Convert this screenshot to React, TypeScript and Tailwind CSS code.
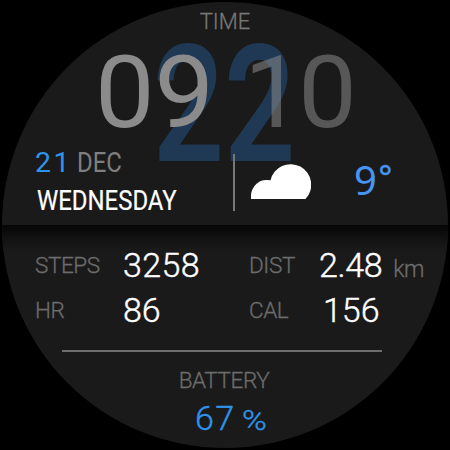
interface StatProps {
  label: string;
  value: string;
  unit?: string;
  valueClass: string;
}

function Stat({ label, value, unit, valueClass }: StatProps) {
  return (
    <div className="flex h-[45px] leading-[45px] whitespace-nowrap font-light">
      <span className="text-[22.5px] tracking-[-0.4px] text-[#6c6c6c] [-webkit-text-stroke:0.3px]">
        {label}
      </span>
      <div className="flex-1" />
      <div className={`shrink-0 text-[34px] text-white [-webkit-text-stroke:0.4px] ${valueClass}`}>
        {value}
        {unit && (
          <span className="ml-[11px] text-[23px] tracking-[-0.3px] text-[#6c6c6c] [-webkit-text-stroke:0.3px]">
            {unit}
          </span>
        )}
      </div>
    </div>
  );
}

function Cloud() {
  return (
    <svg className="w-[60px] h-[35px]" viewBox="0 0 60 35" fill="white">
      <path d="M0 35V33A16 16 0 0 1 19.5 16.3A20.6 20.6 0 1 1 54.5 35Z" />
    </svg>
  );
}

function App() {
  return (
    <div className="w-[450px] h-[450px] bg-black p-[2px] font-['Roboto','Liberation_Sans',sans-serif]">
      <div className="relative w-[446px] h-[446px] rounded-full overflow-hidden bg-[#1a1a1a]">
        {/* Seconds, behind the hours and minutes */}
        <div className="absolute left-[151px] top-[22px] text-[163px] leading-none font-semibold text-[#1f3854] origin-left scale-x-[0.765] whitespace-nowrap">
          22
        </div>

        <div className="relative h-[223px]">
          <div className="pt-[8px] text-center text-[22px] leading-[24px] font-light text-[#777777] [-webkit-text-stroke:0.3px]">
            TIME
          </div>
          <div className="mt-[8px] pl-[93px] flex h-[101px] text-[101px] leading-none">
            <span className="w-[149px] origin-left scale-x-[1.05] text-[#8b8b8b]">09</span>
            <span className="tracking-[-4px] origin-left scale-x-[1.03] text-[#8b8b8b]/55">10</span>
          </div>

          <div className="mt-[6px] pl-[33px] flex">
            <div className="w-[198px] whitespace-nowrap">
              <div className="flex items-baseline h-[28px] leading-[28px]">
                <span className="w-[42px] text-[28.5px] tracking-[2.5px] text-[#2f93ea]">21</span>
                <span className="text-[27.5px] text-[#7f7f7f] origin-left scale-x-[0.87]">DEC</span>
              </div>
              <div className="mt-[10px] ml-[2px] w-fit text-[27.5px] leading-[28px] text-white origin-left scale-x-[0.87] [-webkit-text-stroke:0.2px]">
                WEDNESDAY
              </div>
            </div>
            <div className="mt-[5px] w-[2px] h-[57px] bg-[#777777]" />
            <div className="pl-[16px] pt-[15px]">
              <Cloud />
            </div>
            <div className="pl-[43px] pt-[11px] flex text-[40px] leading-[40px] font-['Noto_Sans',sans-serif] text-[#4795f2]">
              9<span className="text-[32px] leading-[33px] pl-[1.5px] [-webkit-text-stroke:0.5px]">°</span>
            </div>
          </div>
        </div>

        <div className="relative h-[223px]">
          {/* Shadow cast by the upper half */}
          <div className="absolute inset-x-0 top-0 h-[26px] bg-linear-to-b from-[#060606] via-[#121212] to-[#1a1a1a]" />
          <div className="relative pt-[18px] pl-[33px] grid grid-cols-[214px_180px]">
            <Stat label="STEPS" value="3258" valueClass="w-[126px] tracking-[0.4px]" />
            <Stat label="DIST" value="2.48" unit="km" valueClass="w-[110px] tracking-[-0.4px]" />
            <Stat label="HR" value="86" valueClass="w-[126px]" />
            <Stat label="CAL" value="156" valueClass="w-[106px]" />
          </div>
          <div className="mt-[17px] ml-[60px] w-[320px] h-[2px] bg-[#6f6c6f]" />
          <div className="mt-[15px] pr-[2px] text-center text-[22.5px] leading-[26px] font-light tracking-[-0.4px] text-[#6c6c6c] [-webkit-text-stroke:0.3px]">
            BATTERY
          </div>
          <div className="mt-[8px] pl-[193px] flex items-baseline leading-[34px] font-light text-[#2f93ea] [-webkit-text-stroke:0.4px]">
            <span className="text-[34px] tracking-[1.5px]">67</span>
            <span className="ml-[6px] text-[28px] origin-left scale-x-[1.2]">%</span>
          </div>
        </div>
      </div>
    </div>
  );
}

export default App;
